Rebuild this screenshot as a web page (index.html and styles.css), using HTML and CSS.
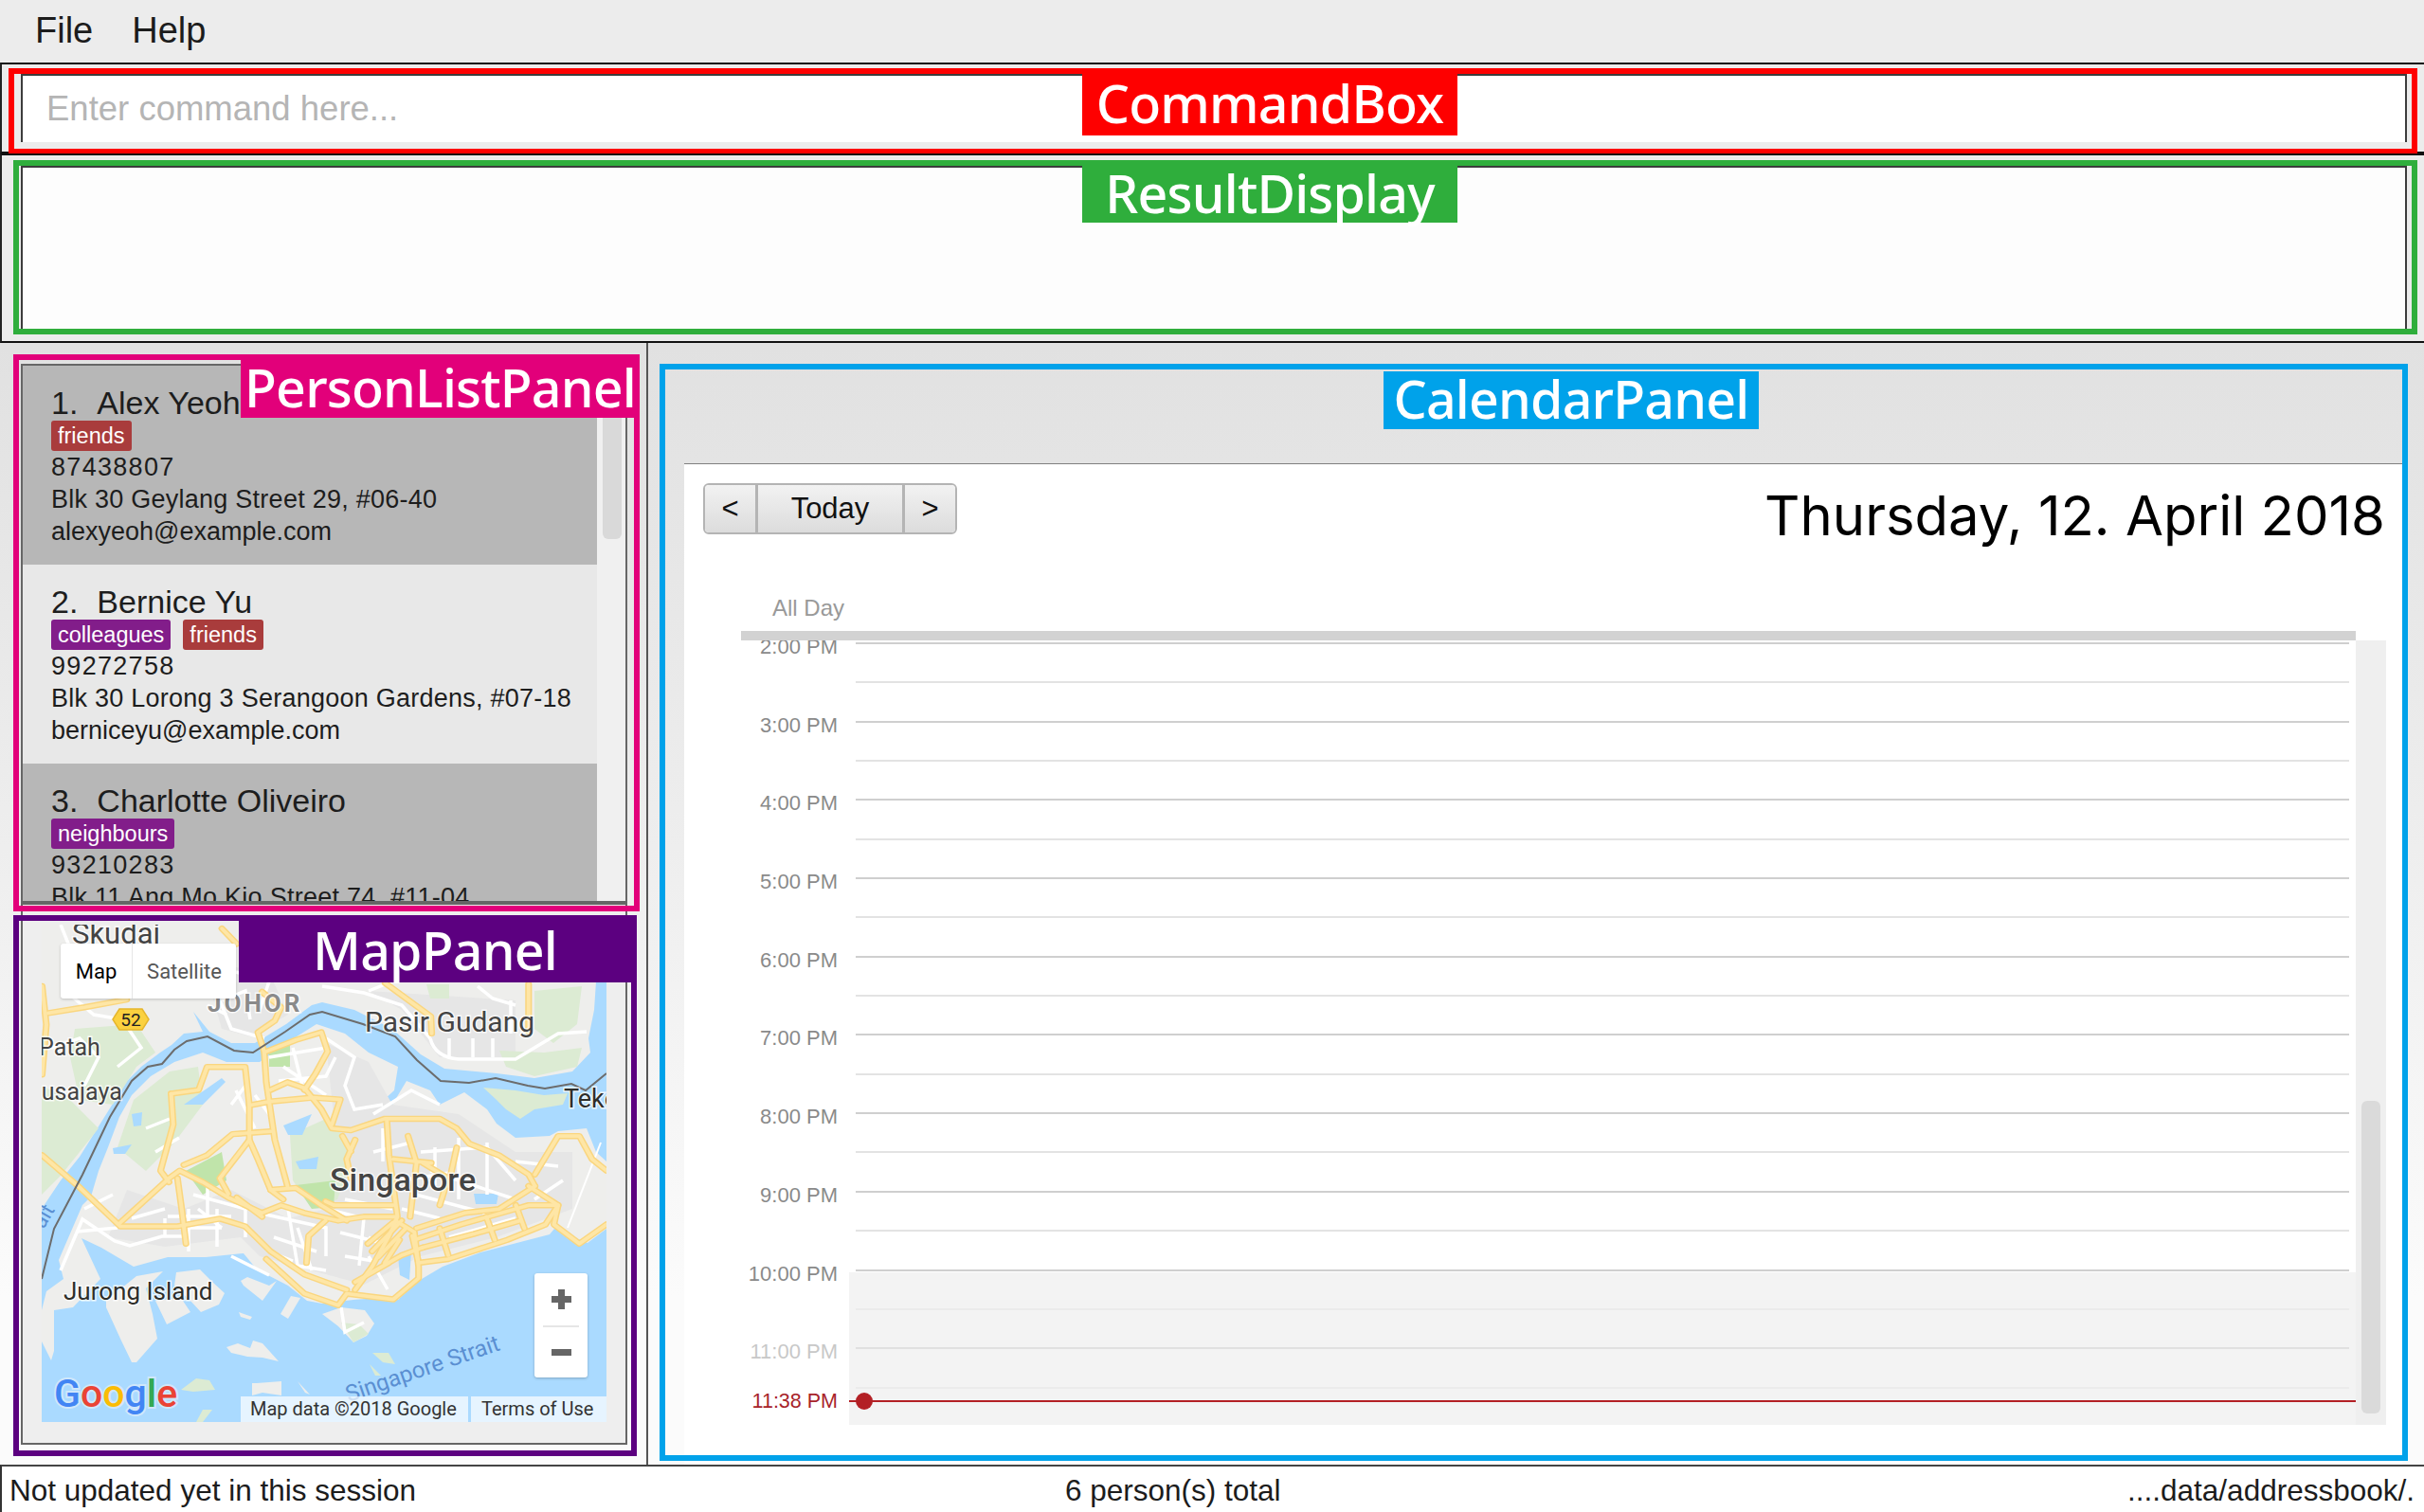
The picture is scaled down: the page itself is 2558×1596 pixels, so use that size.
FILE: index.html
```html
<!DOCTYPE html>
<html>
<head>
  <meta charset="utf-8">
  <title>Address App</title>
  <link rel="stylesheet" href="styles.css">
</head>
<body>
  <div class="app">
    <div class="menu-bar">
      <span>File</span>
      <span>Help</span>
    </div>

    <div class="command-row">
      <div class="command-box">Enter command here...</div>
      <div class="note note-red">
        <span class="note-label label-command">CommandBox</span>
      </div>
    </div>

    <div class="result-row">
      <div class="result-box"></div>
      <div class="note note-green">
        <span class="note-label label-result">ResultDisplay</span>
      </div>
    </div>

    <div class="main">
      <div class="left-col">
        <div class="person-panel">
          <div class="person-card card-dark">
            <div class="person-name"><span class="person-num">1.</span>Alex Yeoh</div>
            <div class="tags"><span class="tag tag-red">friends</span></div>
            <div class="person-line person-phone">87438807</div>
            <div class="person-line person-addr">Blk 30 Geylang Street 29, #06-40</div>
            <div class="person-line">alexyeoh@example.com</div>
          </div>
          <div class="person-card">
            <div class="person-name"><span class="person-num">2.</span>Bernice Yu</div>
            <div class="tags"><span class="tag tag-purple">colleagues</span><span class="tag tag-red">friends</span></div>
            <div class="person-line person-phone">99272758</div>
            <div class="person-line person-addr">Blk 30 Lorong 3 Serangoon Gardens, #07-18</div>
            <div class="person-line">berniceyu@example.com</div>
          </div>
          <div class="person-card card-dark">
            <div class="person-name"><span class="person-num">3.</span>Charlotte Oliveiro</div>
            <div class="tags"><span class="tag tag-purple">neighbours</span></div>
            <div class="person-line person-phone">93210283</div>
            <div class="person-line person-addr">Blk 11 Ang Mo Kio Street 74, #11-04</div>
          </div>
          <div class="list-track"><div class="list-thumb"></div></div>
        </div>

        <div class="map-panel">
          <div class="map">
            <svg class="map-svg" viewBox="0 0 596 525" width="596" height="525">
              <rect class="water" width="596" height="525"/>

              <!-- land -->
              <path class="land" d="M0 0H596V40L585 60 583 90 577 120 579 135 560 155 520 162 480 157 425 152 400 137 370 110 330 90 296 82 285 85 258 105 225 125 200 125 177 113 160 92 170 113 150 115 137 127 125 135 105 150 90 165 65 205 40 245 20 270 0 300Z"/>
              <path class="land" d="M52 287 60 260 70 235 82 203 95 180 115 160 140 145 170 135 195 145 230 145 258 125 290 105 320 115 345 135 376 150 372 175 350 195 370 190 385 165 410 175 420 190 446 177 470 195 480 210 500 225 536 223 545 218 575 215 585 240 596 250V321L576 336 541 321 536 327 509 334 463 346 423 361 396 377 376 396 356 394 329 396 296 400 280 397 260 381 227 364 213 347 173 351 133 351 97 361 63 341 42 331 62 374 33 404 13 407 13 450 10 460 0 440V407L5 387 23 374 18 354 43 296Z"/>
              <path class="land" d="M68 397 100 371 128 366 110 384 117 411 122 437 100 462 95 462 83 437 68 404Z"/>
              <path class="land" d="M142 367 167 364 180 377 193 389 187 401 168 409 157 397 140 381Z"/>
              <path class="land" d="M120 397 147 394 157 409 132 422Z"/>
              <path class="land" d="M210 376 217 372 240 381 248 376 233 397 213 381Z"/>
              <path class="land" d="M252 411 263 392 273 394 260 416Z"/>
              <path class="land" d="M208 409 222 414 220 417 210 414Z"/>
              <path class="land" d="M195 446 207 442 220 447 223 439 233 442 250 461 233 457 217 456 200 452Z"/>
              <path class="land" d="M222 484 227 484 253 482 253 497 233 494 222 497Z"/>
              <path class="land" d="M270 482 283 496 278 494Z"/>
              <path class="land" d="M296 411 316 404 341 407 351 421 343 434 329 441 313 424Z"/>

              <!-- built up areas -->
              <path class="urban" d="M300 125 345 145 370 190 440 200 500 240 560 240 560 300 480 330 400 350 340 380 230 350 210 330 130 340 70 330 90 280 150 300 200 280 260 310 300 300 310 220Z"/>
              <path class="urban" d="M170 40 240 50 260 95 220 118 190 110Z"/>
              <path class="urban" d="M345 70 500 80 500 140 420 140 380 90Z"/>

              <!-- green areas -->
              <path class="park" d="M35 110 100 105 120 135 100 150 75 190 40 185 30 140Z"/>
              <path class="park" d="M0 170 30 185 60 215 20 265 0 285Z"/>
              <path class="park" d="M97 185 135 155 165 150 170 190 140 230 110 260 80 235Z"/>
              <path class="park" d="M262 222 300 205 320 225 325 255 312 290 285 300 265 270Z"/>
              <path class="park" d="M483 133 530 135 570 130 565 150 520 160 490 150Z"/>
              <path class="park" d="M406 63 430 63 430 78 410 78Z"/>
              <path class="park" d="M520 70 570 65 565 105 540 125 520 110Z"/>
              <path class="park" d="M466 172 500 175 530 180 555 178 550 190 520 195 505 205 490 195 480 185Z"/>
              <path class="park" d="M147 491 163 479 177 481 183 491 160 493Z"/>
              <path class="park" d="M163 525 170 512 180 512 170 525Z"/>
              <path class="park" d="M349 452 366 452 373 464 360 462Z"/>
              <path class="park" d="M346 464 358 476 352 476Z"/>
              <path class="park" d="M316 420 335 422 345 432 329 441Z"/>
              <path class="park-strong" d="M268 275 310 270 308 298 285 300Z"/>
              <path class="park-strong" d="M152 260 190 240 195 270 170 285Z"/>
              <path class="park-strong" d="M240 130 262 125 262 150 240 150Z"/>

              <!-- reservoirs -->
              <path class="water" d="M95 200 106 198 105 212 97 213Z"/>
              <path class="water" d="M75 236 95 232 88 242 76 242Z"/>
              <path class="water" d="M255 212 285 200 275 222 260 222Z"/>
              <path class="water" d="M268 250 292 245 290 258 272 258Z"/>
              <path class="water" d="M150 190 190 162 194 166 170 190Z"/>
              <path class="water" d="M456 284 482 284 480 295 458 295Z"/>
              <path class="water" d="M376 350 390 345 388 375 378 370Z"/>

              <!-- minor roads -->
              <g class="road-minor">
                <path d="M25 70 55 95 85 100 105 130 80 150"/>
                <path d="M10 130 40 120 60 140 45 170"/>
                <path d="M20 0 30 25 70 20"/>
                <path d="M180 60 200 110 235 120"/>
                <path d="M190 80 215 70 220 100M205 50 240 60 230 90M175 85 195 95"/>
                <path d="M296 65 340 72 380 85 410 120"/>
                <path d="M410 120Q415 140 440 142H500L545 115 575 113"/>
                <path d="M430 120V140M455 120V140M476 120V140M495 80V115M345 70 370 60M460 65 476 78 500 85"/>
                <path d="M300 120 330 140 320 170 330 195 360 190"/>
                <path d="M350 200 390 175 420 190"/>
                <path d="M400 240 470 235 500 270"/>
                <path d="M410 260 500 290M395 285 470 305"/>
                <path d="M440 225V290M470 230V285M380 270 430 262M415 235V275M350 240 390 230M360 215V250"/>
                <path d="M250 165 300 160 310 140M255 150 300 180M240 140 300 130M265 130 275 170"/>
                <path d="M155 300V345M133 308H200M160 285 215 300V330M175 275V310M130 310V330M140 320H190M185 300V340"/>
                <path d="M20 365 43 311 77 334 93 339 127 329 150 329"/>
                <path d="M37 324 80 320M45 300 75 285M95 310 130 300"/>
                <path d="M232 305 300 320V350M245 330 290 345M300 300 340 310 335 360M320 290 370 300M260 300 270 360 300 365"/>
                <path d="M270 320 285 365M315 325 355 335M320 350 350 355M240 345 265 355"/>
                <path d="M200 350 240 370M345 330 370 345M345 350 365 385"/>
                <path d="M380 300 420 310M430 330 500 310M520 290 550 270M500 250 545 255"/>
                <path d="M316 404 320 430 340 420"/>
                <path d="M225 180 240 200M205 175 225 215M165 300 190 320M200 190 215 170"/>
                <path d="M110 215 135 205M120 240 145 225"/>
              </g>
              <path class="road-light" d="M555 320 590 230"/>

              <!-- motorways, traced on the 2.24 x 2.465 crop -->
              <g transform="translate(-44.2 -16.2) scale(.4464 .4057)">
                <defs>
                  <g id="motorways">
                    <path d="M625 370 630 450 650 600 680 720"/>
                    <path d="M625 370 610 320 650 290 665 255 620 215"/>
                    <path d="M525 50 560 90"/>
                    <path d="M630 370 700 340 760 320 775 370 745 430 720 470"/>
                    <path d="M640 470 680 450 720 465 760 520 785 570 830 575 910 545H1040L1080 570 1110 610 1180 640 1250 690 1265 720"/>
                    <path d="M590 510 640 500 740 490 805 495 785 560"/>
                    <path d="M405 480 470 470 490 410H580L590 510V600L610 650 640 730 670 755"/>
                    <path d="M405 480 410 560 380 680 400 710"/>
                    <path d="M285 815 330 770 400 700 425 680 480 710 540 750 620 790 665 770 720 790 800 810 860 800H935"/>
                    <path d="M100 640 190 725 285 825H420L520 805 580 825 640 890 720 950 820 990"/>
                    <path d="M435 665 490 640 550 585 640 578"/>
                    <path d="M590 600 520 700 540 740"/>
                    <path d="M420 700 430 780 440 870M560 750 620 800"/>
                    <path d="M640 730 700 725 760 770 820 810"/>
                    <path d="M915 550 920 640 940 800 920 850 880 930 840 990"/>
                    <path d="M770 760 790 770M770 810 730 850 725 920"/>
                    <path d="M980 860 1090 820 1250 770H1320L1290 820 1200 860 1060 910 990 920 975 850"/>
                    <path d="M1000 880 1120 845 1230 810"/>
                    <path d="M935 810 980 840 990 930V960L930 1015 820 1000 800 1030 720 1000 630 910"/>
                    <path d="M1265 720 1180 780 1100 790 985 830"/>
                    <path d="M1250 720 1320 770 1310 820 1370 870 1434 820"/>
                    <path d="M1265 690 1320 590H1370L1400 650 1434 680"/>
                    <path d="M115 270 200 255 300 235"/>
                    <path d="M100 200 110 300 100 430"/>
                    <path d="M911 192 1019 279 1021 323"/>
                    <path d="M1250 195V318"/>
                    <path d="M1080 620 1060 720M1000 660 1060 700 1040 770M930 650 1020 660M965 590 985 660 970 800"/>
                    <path d="M840 600 820 650 830 700M790 770H930M810 590 830 630"/>
                    <path d="M880 890 950 810M895 905 960 830M910 920 945 860M870 870 930 815"/>
                    <path d="M870 950 950 900 1000 880M840 970 920 920"/>
                    <path d="M1040 830 1060 900M1150 800 1170 860M1220 770 1240 830"/>
                  </g>
                </defs>
                <use href="#motorways" class="road-casing"/>
                <use href="#motorways" class="road-fill"/>
              </g>

              <!-- state border -->
              <path class="border-line" d="M0 374 13 321 43 264 72 203 95 165 112 150 127 147 140 132 153 123 175 118 203 133 223 135 257 113 283 95 296 92 339 105 373 118 396 143 421 165 451 167 479 162 513 170 531 173 559 168 574 175 596 157"/>

              <text class="map-text" x="32" y="20" font-size="31">Skudai</text>
              <text class="map-text map-text-grey" x="175" y="92" font-size="26" font-weight="700" letter-spacing="3">JOHOR</text>
              <text class="map-text" x="341" y="113" font-size="30">Pasir Gudang</text>
              <text class="map-text" x="-3" y="138" font-size="25">Patah</text>
              <text class="map-text" x="-18" y="185" font-size="25">Nusajaya</text>
              <text class="map-text map-text-dark" x="551" y="193" font-size="27">Tekong</text>
              <text class="map-text" x="304" y="281" font-size="34" font-weight="500">Singapore</text>
              <text class="map-text map-text-dark" x="23" y="396" font-size="26">Jurong Island</text>
              <text class="map-text-sea" transform="translate(324 504) rotate(-19)" font-size="24">Singapore Strait</text>
              <text class="map-text-sea" transform="translate(2 322) rotate(-60)" font-size="22">ait</text>

              <polygon class="shield" points="75,100 82,89 106,89 113,100 106,111 82,111"/>
              <text class="shield-text" x="94" y="107" font-size="19">52</text>

              <text class="google" x="13" y="509" font-size="41"><tspan fill="#4285f4">G</tspan><tspan fill="#ea4335">o</tspan><tspan fill="#fbbc05">o</tspan><tspan fill="#4285f4">g</tspan><tspan fill="#34a853">l</tspan><tspan fill="#ea4335">e</tspan></text>
            </svg>

            <div class="map-type">
              <span class="map-type-btn map-type-on">Map</span>
              <span class="map-type-btn">Satellite</span>
            </div>
            <div class="zoom-ctl">
              <div class="zoom-btn"><span class="zoom-plus"></span></div>
              <div class="zoom-btn zoom-btn-low"><span class="zoom-minus"></span></div>
            </div>
            <div class="attrib">
              <span class="attrib-data">Map data ©2018 Google</span>
              <span class="attrib-terms">Terms of Use</span>
            </div>
          </div>
        </div>

        <div class="note note-pink">
          <span class="note-label label-person">PersonListPanel</span>
        </div>
        <div class="note note-purple">
          <span class="note-label label-map">MapPanel</span>
        </div>
      </div>

      <div class="right-col">
        <div class="cal-head"></div>
        <div class="cal-body">
          <div class="cal-toolbar">
            <div class="btn-group">
              <button class="cal-btn btn-nav">&lt;</button>
              <button class="cal-btn btn-today">Today</button>
              <button class="cal-btn btn-nav">&gt;</button>
            </div>
            <div class="cal-date">Thursday, 12. April 2018</div>
          </div>
          <div class="all-day">All Day</div>
          <div class="all-day-bar"></div>
          <div class="day-grid">
            <div class="evening"></div>
            <div class="slot"><span class="slot-time">2:00 PM</span><span class="slot-line"></span></div>
            <div class="slot"><span class="slot-time"></span><span class="slot-line half"></span></div>
            <div class="slot"><span class="slot-time">3:00 PM</span><span class="slot-line"></span></div>
            <div class="slot"><span class="slot-time"></span><span class="slot-line half"></span></div>
            <div class="slot"><span class="slot-time">4:00 PM</span><span class="slot-line"></span></div>
            <div class="slot"><span class="slot-time"></span><span class="slot-line half"></span></div>
            <div class="slot"><span class="slot-time">5:00 PM</span><span class="slot-line"></span></div>
            <div class="slot"><span class="slot-time"></span><span class="slot-line half"></span></div>
            <div class="slot"><span class="slot-time">6:00 PM</span><span class="slot-line"></span></div>
            <div class="slot"><span class="slot-time"></span><span class="slot-line half"></span></div>
            <div class="slot"><span class="slot-time">7:00 PM</span><span class="slot-line"></span></div>
            <div class="slot"><span class="slot-time"></span><span class="slot-line half"></span></div>
            <div class="slot"><span class="slot-time">8:00 PM</span><span class="slot-line"></span></div>
            <div class="slot"><span class="slot-time"></span><span class="slot-line half"></span></div>
            <div class="slot"><span class="slot-time">9:00 PM</span><span class="slot-line"></span></div>
            <div class="slot"><span class="slot-time"></span><span class="slot-line half"></span></div>
            <div class="slot"><span class="slot-time">10:00 PM</span><span class="slot-line"></span></div>
            <div class="slot"><span class="slot-time"></span><span class="slot-line half-late"></span></div>
            <div class="slot"><span class="slot-time time-faint">11:00 PM</span><span class="slot-line hour-late"></span></div>
            <div class="slot"><span class="slot-time"></span><span class="slot-line half-late"></span></div>
            <div class="day-track"><div class="day-thumb"></div></div>
            <div class="now-time">11:38 PM</div>
            <div class="now-line"><span class="now-dot"></span></div>
          </div>
        </div>
        <div class="note note-blue">
          <span class="note-label label-cal">CalendarPanel</span>
        </div>
      </div>
    </div>

    <div class="status-bar">
      <span class="status-left">Not updated yet in this session</span>
      <span>6 person(s) total</span>
      <span class="status-right">....data/addressbook/.</span>
    </div>
  </div>
</body>
</html>
```

FILE: styles.css
```css
html, body {
  margin: 0;
  padding: 0;
}

body {
  font-family: "Liberation Sans", Arial, sans-serif;
  color: #1c1c1c;
  background: #ececec;
}

.app {
  width: 2558px;
  height: 1596px;
  display: flex;
  flex-direction: column;
  overflow: hidden;
}

/* menu */
.menu-bar {
  height: 66px;
  flex: none;
  box-sizing: border-box;
  padding: 0 0 2px 37px;
  display: flex;
  align-items: center;
  gap: 41px;
  font-size: 38px;
  background: #ececec;
}

/* command + result rows */
.command-row {
  height: 96px;
  flex: none;
  box-sizing: border-box;
  position: relative;
  padding: 10px 18px 10px 20px;
  border-top: 2px solid #111;
  border-bottom: 2px solid #111;
  border-left: 2px solid #222;
  background: #ececec;
}

.command-box {
  height: 72px;
  box-sizing: border-box;
  padding: 0 0 0 25px;
  display: flex;
  align-items: center;
  border: 2px solid #3c3c3c;
  border-bottom: none;
  background: #fff;
  font-size: 36.5px;
  color: #b5b5b5;
}

.result-row {
  height: 200px;
  flex: none;
  box-sizing: border-box;
  position: relative;
  padding: 11px 18px 13px 20px;
  border-top: 2px solid #111;
  border-bottom: 2px solid #111;
  border-left: 2px solid #222;
  background: #ececec;
}

.result-box {
  height: 172px;
  box-sizing: border-box;
  border: 2px solid #3c3c3c;
  border-bottom: none;
  background: #fdfdfd;
}

/* annotation frames */
.note {
  position: absolute;
  box-sizing: border-box;
  border: 6px solid;
}

.note-label {
  position: absolute;
  top: 0;
  display: flex;
  align-items: center;
  justify-content: center;
  box-sizing: border-box;
  padding-bottom: 4px;
  font-family: "Noto Sans", "Open Sans", sans-serif;
  font-size: 55.5px;
  font-weight: 500;
  letter-spacing: -.8px;
  color: #fff;
  white-space: nowrap;
}

.note-red {
  left: 7px;
  top: 4px;
  width: 2542px;
  height: 91px;
  border-color: #fe0000;
}

.label-command {
  left: 1127px;
  width: 396px;
  height: 65px;
  background: #fe0000;
}

.note-green {
  left: 12px;
  top: 5px;
  width: 2537px;
  height: 184px;
  border-color: #2fae3c;
}

.label-result {
  left: 1122px;
  width: 396px;
  height: 60px;
  background: #2fae3c;
}

.note-pink {
  left: 14px;
  top: 12px;
  width: 661px;
  height: 588px;
  border-color: #e2007a;
}

.label-person {
  left: 234px;
  width: 415px;
  height: 61px;
  padding-left: 6px;
  background: #e2007a;
}

.note-purple {
  left: 14px;
  top: 604px;
  width: 658px;
  height: 571px;
  border-color: #5c0080;
}

.label-map {
  left: 232px;
  width: 414px;
  height: 65px;
  background: #5c0080;
}

.note-blue {
  left: 12px;
  top: 22px;
  width: 1845px;
  height: 1158px;
  border-color: #00a2ea;
}

.label-cal {
  left: 758px;
  width: 396px;
  height: 61px;
  top: 2px;
  background: #00a2ea;
}

/* main split */
.main {
  flex: 1;
  display: flex;
  min-height: 0;
  background: linear-gradient(#e1e1e1, #eeeeee 45%, #fbfbfb 85%);
}

.left-col {
  flex: none;
  box-sizing: border-box;
  position: relative;
  padding: 22px 20px 0 22px;
  border-right: 2px solid #555;
  width: 684px;
}

/* person list */
.person-panel {
  height: 571px;
  box-sizing: border-box;
  position: relative;
  padding-right: 30px;
  border: 2px solid #666;
  border-bottom-width: 4px;
  overflow: hidden;
  background: #f0f0f0;
}

.person-card {
  height: 210px;
  box-sizing: border-box;
  padding: 18px 0 0 30px;
  background: #e8e8e8;
  color: #1d1d1d;
}

.card-dark {
  background: #b7b7b7;
}

.person-name {
  height: 40px;
  line-height: 42px;
  font-size: 34px;
}

.person-num {
  margin-right: 20px;
}

.tags {
  height: 32px;
  display: flex;
  gap: 13px;
}

.tag {
  height: 32px;
  line-height: 33px;
  padding: 0 7px;
  border-radius: 3px;
  font-size: 23.5px;
  color: #fff;
}

.tag-red {
  background: #a93c3c;
}

.tag-purple {
  background: #821d8a;
}

.person-line {
  height: 34px;
  line-height: 34px;
  font-size: 27px;
  white-space: nowrap;
}

.person-phone {
  letter-spacing: 1.3px;
}

.person-addr {
  letter-spacing: .25px;
}

.list-track {
  position: absolute;
  top: 0;
  right: 0;
  bottom: 0;
  width: 30px;
  background: #f0f0f0;
}

.list-thumb {
  position: absolute;
  top: 0;
  left: 6px;
  width: 20px;
  height: 183px;
  border-radius: 6px;
  background: #d9d9d9;
}

/* map */
.map-panel {
  height: 570px;
  box-sizing: border-box;
  padding: 19px 20px 0;
  border: 2px solid #666;
  border-top: none;
  background: #eeeeee;
}

.map {
  position: relative;
  width: 596px;
  height: 525px;
  overflow: hidden;
  margin-top: 2px;
}

.map-svg {
  display: block;
}

.water {
  fill: #aadaff;
}

.land {
  fill: #eeeeec;
}

.urban {
  fill: #e6e6e6;
}

.park {
  fill: #dcebd3;
}

.park-strong {
  fill: #c0e4aa;
}

.road-minor path {
  fill: none;
  stroke: #fff;
  stroke-width: 3.5;
}

.road-light {
  fill: none;
  stroke: #fff;
  stroke-width: 2;
}

.road-casing,
.road-fill {
  fill: none;
  stroke-linejoin: round;
  stroke-linecap: round;
}

.road-casing {
  stroke: #fad67f;
  stroke-width: 16;
}

.road-fill {
  stroke: #fee6a6;
  stroke-width: 9;
}

.border-line {
  fill: none;
  stroke: #6c6c6c;
  stroke-width: 2;
}

.map-text {
  font-family: Roboto, sans-serif;
  fill: #444;
  paint-order: stroke;
  stroke: rgba(255, 255, 255, .75);
  stroke-width: 3px;
}

.map-text-grey {
  fill: #8a8a8a;
}

.map-text-dark {
  fill: #2e2e2a;
}

.map-text-sea {
  font-family: Roboto, sans-serif;
  fill: #5a8fd2;
}

.shield {
  fill: #fbd13f;
  stroke: #e6b62c;
  stroke-width: 1.5;
}

.shield-text {
  font-family: Roboto, sans-serif;
  text-anchor: middle;
  fill: #222;
}

.google {
  font-family: Roboto, sans-serif;
  font-weight: 500;
  paint-order: stroke;
  stroke: #cfe7fb;
  stroke-width: 4px;
}

.map-type {
  position: absolute;
  left: 20px;
  top: 20px;
  width: 185px;
  height: 58px;
  display: flex;
  border-radius: 3px;
  background: #fff;
  box-shadow: 0 1px 3px rgba(0, 0, 0, .2);
  font-family: Roboto, sans-serif;
  font-size: 22px;
}

.map-type-btn {
  display: flex;
  align-items: center;
  justify-content: center;
  flex: 1;
  color: #565656;
}

.map-type-on {
  flex: none;
  width: 75px;
  border-right: 1px solid #e6e6e6;
  color: #000;
}

.zoom-ctl {
  position: absolute;
  left: 520px;
  top: 368px;
  width: 56px;
  height: 110px;
  border-radius: 3px;
  background: #fff;
  box-shadow: 0 1px 3px rgba(0, 0, 0, .25);
}

.zoom-btn {
  height: 55px;
  position: relative;
}

.zoom-btn-low::before {
  content: "";
  position: absolute;
  left: 9px;
  right: 9px;
  top: 0;
  height: 2px;
  background: #e6e6e6;
}

.zoom-plus,
.zoom-minus {
  position: absolute;
  left: 18px;
  width: 21px;
  height: 7px;
  top: 24px;
  background: #666;
}

.zoom-minus {
  top: 25px;
}

.zoom-plus::after {
  content: "";
  position: absolute;
  left: 7px;
  top: -7px;
  width: 7px;
  height: 21px;
  background: #666;
}

.attrib {
  position: absolute;
  left: 210px;
  right: 0;
  bottom: 0;
  height: 27px;
  display: flex;
  gap: 3px;
  font-family: Roboto, sans-serif;
  font-size: 20px;
  line-height: 27px;
  color: #333;
}

.attrib-data,
.attrib-terms {
  background: rgba(255, 255, 255, .7);
  white-space: nowrap;
}

.attrib-data {
  width: 240px;
  padding-left: 10px;
  box-sizing: border-box;
}

.attrib-terms {
  flex: 1;
  padding-left: 11px;
}

/* calendar */
.right-col {
  flex: 1;
  position: relative;
  box-sizing: border-box;
  padding: 28px 23px 0 38px;
  display: flex;
  flex-direction: column;
}

.cal-head {
  height: 100px;
  flex: none;
  box-sizing: border-box;
  border-bottom: 1px solid #808080;
}

.cal-body {
  flex: 1;
  background: #fff;
}

.cal-toolbar {
  display: flex;
  justify-content: space-between;
  height: 74px;
  box-sizing: border-box;
  padding: 20px 18px 0 20px;
}

.btn-group {
  display: flex;
  height: 54px;
  width: 268px;
  box-sizing: border-box;
  border: 2px solid #b4b4b4;
  border-radius: 6px;
  overflow: hidden;
}

.cal-btn {
  height: 100%;
  padding: 0;
  border: none;
  background: linear-gradient(#f2f2f2, #dcdcdc);
  font-family: "Liberation Sans", Arial, sans-serif;
  font-size: 31px;
  color: #111;
}

.btn-nav {
  width: 53px;
  flex: none;
}

.btn-today {
  flex: 1;
  border-left: 3px solid #b4b4b4;
  border-right: 3px solid #b4b4b4;
}

.cal-date {
  margin-top: -1px;
  font-family: Inter, sans-serif;
  font-size: 58px;
  line-height: 70px;
  color: #000;
  white-space: nowrap;
}

.all-day {
  margin-top: 64px;
  width: 169px;
  height: 28px;
  line-height: 28px;
  text-align: right;
  font-size: 24px;
  color: #999;
}

.all-day-bar {
  height: 10px;
  margin: 10px 49px 0 60px;
  background: #d2d2d2;
}

.day-grid {
  position: relative;
  height: 828px;
  margin: 0 17px 0 60px;
  box-sizing: border-box;
  padding-top: 2px;
  overflow: hidden;
}

.evening {
  position: absolute;
  left: 114px;
  right: 32px;
  top: 667px;
  bottom: 0;
  background: #f3f3f3;
}

.slot {
  position: relative;
  height: 41.35px;
  display: flex;
}

.slot-time {
  width: 102px;
  height: 2px;
  padding-top: 4px;
  flex: none;
  display: flex;
  align-items: center;
  justify-content: flex-end;
  white-space: nowrap;
  font-size: 22px;
  color: #8a8a8a;
}

.time-faint {
  color: #c8c8c8;
}

.slot-line {
  flex: 1;
  height: 2px;
  margin: 0 39px 0 19px;
  background: #cfcfcf;
}

.half {
  background: #e3e3e3;
}

.half-late {
  background: #ebebeb;
}

.hour-late {
  background: #e0e0e0;
}

.day-track {
  position: absolute;
  top: 0;
  right: 0;
  bottom: 0;
  width: 32px;
  background: #efefef;
}

.day-thumb {
  position: absolute;
  left: 6px;
  width: 20px;
  top: 486px;
  height: 330px;
  border-radius: 6px;
  background: #dadada;
}

.now-time {
  position: absolute;
  left: 0;
  top: 802px;
  width: 102px;
  height: 2px;
  display: flex;
  align-items: center;
  justify-content: flex-end;
  white-space: nowrap;
  font-size: 21.5px;
  color: #a8232a;
}

.now-line {
  position: absolute;
  left: 114px;
  right: 32px;
  top: 802px;
  height: 2px;
  background: #b32025;
}

.now-dot {
  position: absolute;
  left: 7px;
  top: -8px;
  width: 18px;
  height: 18px;
  border-radius: 50%;
  background: #b32025;
}

/* status bar */
.status-bar {
  height: 50px;
  flex: none;
  box-sizing: border-box;
  display: flex;
  align-items: center;
  padding: 3px 10px 0 8px;
  border-top: 2px solid #444;
  border-left: 2px solid #333;
  background: #fff;
  font-size: 31.5px;
  color: #1c1c1c;
  white-space: nowrap;
}

.status-left {
  width: 1114px;
  flex: none;
}

.status-right {
  margin-left: auto;
}
```
